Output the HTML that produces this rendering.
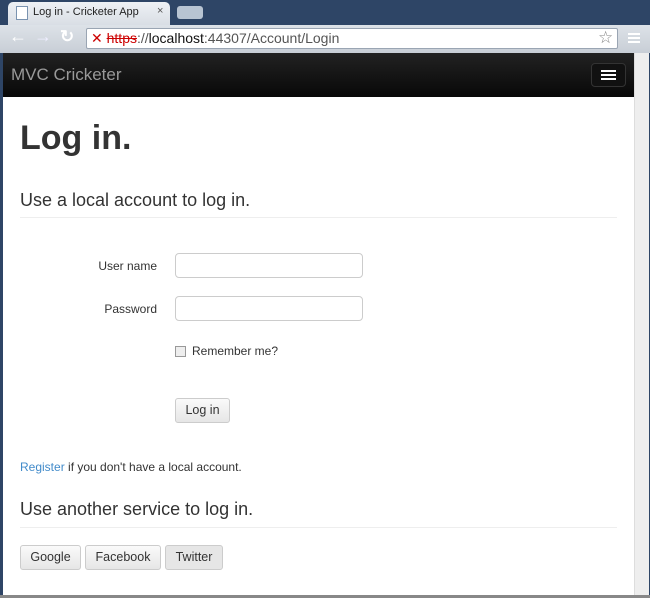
<!DOCTYPE html>
<html><head><style>
*{margin:0;padding:0;box-sizing:border-box}
body{width:650px;height:598px;overflow:hidden;background:#2e4566;font-family:"Liberation Sans",sans-serif;position:relative}
.a{position:absolute}
.inp{position:absolute;left:175px;width:188px;height:25px;border:1px solid #ccc;border-radius:4px;background:#fff}
.btn{position:absolute;top:545px;height:25px;border:1px solid #ccc;border-radius:3px;background:linear-gradient(#fafafa,#e6e6e6);font-size:12.5px;color:#333;text-align:center;line-height:23px}
.lbl{position:absolute;right:493px;font-size:12px;color:#333}
</style></head><body>
<div class="a" style="left:8px;top:2px;width:162px;height:24px;background:linear-gradient(#eef1f5,#d8dde4);border-radius:5px 5px 0 0"></div>
<div class="a" style="left:16px;top:6px;width:12px;height:14px;background:#fff;border:1px solid #7a93b0"></div>
<div class="a" style="left:33px;top:6px;font-size:11px;color:#222">Log in - Cricketer App</div>
<div class="a" style="left:157px;top:5px;font-size:11px;color:#555">×</div>
<div class="a" style="left:177px;top:6px;width:26px;height:13px;background:#b8c4d2;border-radius:3px"></div>
<div class="a" style="left:0;top:25px;width:650px;height:28px;background:linear-gradient(#dde2e8,#c8ced6)"></div>
<div class="a" style="left:9px;top:26px;font-size:18px;color:#fff;font-weight:bold">←</div>
<div class="a" style="left:34px;top:26px;font-size:18px;color:#eef;font-weight:bold">→</div>
<div class="a" style="left:60px;top:27px;font-size:17px;color:#fff;font-weight:bold">↻</div>
<div class="a" style="left:86px;top:28px;width:532px;height:21px;background:#fff;border:1px solid #9aa5b3;border-radius:2px"></div>
<div class="a" style="left:91px;top:30px;font-size:14px;color:#555;white-space:nowrap"><span style="color:#c00">✕ <s>https</s></span>://<span style="color:#111">localhost</span>:44307/Account/Login</div>
<div class="a" style="left:598px;top:28px;font-size:17px;color:#888">☆</div>
<div class="a" style="left:628px;top:33px;width:12px;height:2px;background:#fff;box-shadow:0 4px #fff,0 8px #fff"></div>
<div class="a" style="left:3px;top:53px;width:631px;height:44px;background:linear-gradient(#222,#080808)"></div>
<div class="a" style="left:11px;top:65px;font-size:17px;color:#999">MVC Cricketer</div>
<div class="a" style="left:591px;top:63px;width:35px;height:24px;background:#111;border:1px solid #333;border-radius:4px"></div>
<div class="a" style="left:601px;top:70px;width:15px;height:2px;background:#fff;box-shadow:0 4px #fff,0 8px #fff"></div>
<div class="a" style="left:3px;top:97px;width:631px;height:498px;background:#fff"></div>
<div class="a" style="left:634px;top:53px;width:15px;height:542px;background:#eee;border-left:1px solid #ddd"></div>
<div class="a" style="left:0;top:595px;width:650px;height:3px;background:#888"></div>
<div class="a" style="left:20px;top:119px;font-size:34px;font-weight:bold;color:#333">Log in.</div>
<div class="a" style="left:20px;top:190px;font-size:18px;color:#333">Use a local account to log in.</div>
<div class="a" style="left:20px;top:217px;width:597px;height:1px;background:#eee"></div>
<div class="lbl" style="top:259px">User name</div>
<div class="inp" style="top:253px"></div>
<div class="lbl" style="top:302px">Password</div>
<div class="inp" style="top:296px"></div>
<div class="a" style="left:175px;top:346px;width:11px;height:11px;border:1px solid #999;background:#eee"></div>
<div class="a" style="left:192px;top:344px;font-size:12px;color:#333">Remember me?</div>
<div class="btn" style="left:175px;top:398px;width:55px">Log in</div>
<div class="a" style="left:20px;top:460px;font-size:12px;color:#333"><span style="color:#428bca">Register</span> if you don't have a local account.</div>
<div class="a" style="left:20px;top:499px;font-size:18px;color:#333">Use another service to log in.</div>
<div class="a" style="left:20px;top:527px;width:597px;height:1px;background:#eee"></div>
<div class="btn" style="left:20px;width:61px">Google</div>
<div class="btn" style="left:85px;width:76px">Facebook</div>
<div class="btn" style="left:165px;width:58px;background:#e6e6e6">Twitter</div>
</body></html>
